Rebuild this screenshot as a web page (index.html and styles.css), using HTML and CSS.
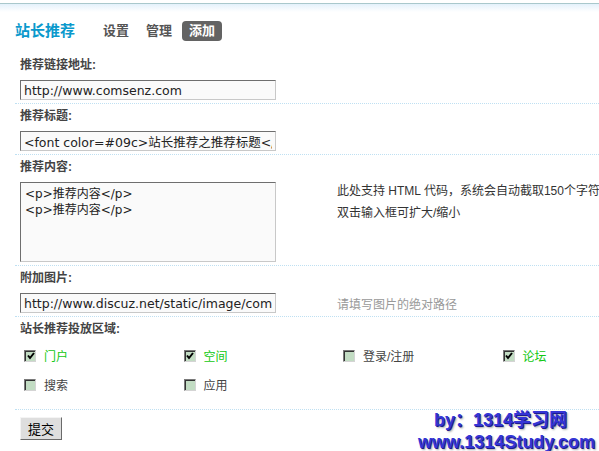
FILE: index.html
```html
<!DOCTYPE html>
<html lang="zh-CN">
  <head>
    <meta charset="utf-8" />
    <title>站长推荐 - 添加</title>
    <link rel="stylesheet" href="styles.css">
  </head>
  <body>
    <div class="topbar"></div>

    <div class="nav">
      <h1 class="nav-title">站长推荐</h1>
      <a class="tab" href="#">设置</a>
      <a class="tab" href="#">管理</a>
      <a class="tab current" href="#">添加</a>
    </div>

    <form class="form">
      <div class="row">
        <div class="label">推荐链接地址:</div>
        <div class="field">
          <input class="txt" type="text" value="http://www.comsenz.com">
        </div>
      </div>

      <div class="row">
        <div class="label">推荐标题:</div>
        <div class="field">
          <input class="txt" type="text" value="<font color=#09c>站长推荐之推荐标题</font>">
        </div>
      </div>

      <div class="row">
        <div class="label">推荐内容:</div>
        <div class="field field-top">
          <textarea class="area"><p>推荐内容</p>
<p>推荐内容</p></textarea>
          <div class="hint hint-dark">
            此处支持 HTML 代码，系统会自动截取150个字符<br>
            双击输入框可扩大/缩小
          </div>
        </div>
      </div>

      <div class="row">
        <div class="label">附加图片:</div>
        <div class="field">
          <input class="txt" type="text" value="http://www.discuz.net/static/image/common/logo.png">
          <div class="hint">请填写图片的绝对路径</div>
        </div>
      </div>

      <div class="row row-checks">
        <div class="label">站长推荐投放区域:</div>
        <div class="checks">
          <label class="check on"><span class="box"><svg viewBox="0 0 8 8"><polyline points="1,3.5 3,6 7,1"/></svg></span>门户</label>
          <label class="check on"><span class="box"><svg viewBox="0 0 8 8"><polyline points="1,3.5 3,6 7,1"/></svg></span>空间</label>
          <label class="check"><span class="box"></span>登录/注册</label>
          <label class="check on"><span class="box"><svg viewBox="0 0 8 8"><polyline points="1,3.5 3,6 7,1"/></svg></span>论坛</label>
          <label class="check"><span class="box"></span>搜索</label>
          <label class="check"><span class="box"></span>应用</label>
        </div>
      </div>

      <div class="row row-submit">
        <button class="btn" type="button">提交</button>
      </div>
    </form>

    <!-- site watermark over the corner -->
    <div class="watermark">
      <div class="wm-line wm-first">by：1314学习网</div>
      <div class="wm-line">www.1314Study.com</div>
    </div>
  </body>
</html>
```

FILE: styles.css
```css
html,
body {
  margin: 0;
  overflow: hidden;
}
body {
  position: relative;
  height: 451px;
  background: #fff;
  font-family: "Liberation Sans", "Noto Sans CJK SC", sans-serif;
  font-size: 12px;
  color: #333;
}

.topbar {
  margin-top: 3px;
  height: 8px;
  border-top: 1px solid #a9c8cc;
  background: linear-gradient(#e4f1fb, #fff);
}

.nav {
  display: flex;
  align-items: center;
  height: 20px;
  padding: 9px 0 12px 15px;
}
.nav-title {
  margin: 0 21px 0 0;
  font-size: 15px;
  font-weight: bold;
  line-height: 20px;
  color: #0a99cc;
}
.tab {
  margin-right: 3px;
  padding: 0 7px;
  font-size: 13px;
  font-weight: bold;
  line-height: 20px;
  color: #555;
  text-decoration: none;
}
.tab.current {
  background: #636363;
  color: #fff;
  border-radius: 4px;
}

.row {
  margin-left: 15px;
  padding: 3px 0 3px 5px;
  border-bottom: 1px dotted #bfe0f2;
}
.label {
  margin-bottom: 6px;
  line-height: 18px;
  font-weight: bold;
  color: #444;
}
.field {
  display: flex;
  align-items: center;
  overflow: hidden;
  white-space: nowrap;
}
.field-top {
  align-items: flex-start;
}

.txt,
.area {
  box-sizing: border-box;
  flex: none;
  width: 256px;
  margin: 0;
  background: #fafafa;
  border: 1px solid;
  border-color: #6e6e6e #c8c8c8 #c8c8c8 #6e6e6e;
  font-family: "DejaVu Sans", "Noto Sans CJK SC", sans-serif;
  color: #222;
  outline: none;
}
.txt {
  height: 20px;
  padding: 0 3px;
  font-size: 12.5px;
}
.area {
  height: 80px;
  padding: 3px 4px;
  font-size: 12px;
  line-height: 16px;
  resize: none;
}

/* long hint is cut at the window edge, as in the old admin page */
.hint {
  min-width: 0;
  margin-left: 61px;
  overflow: hidden;
  color: #999;
}
.hint-dark {
  margin-top: -2px;
  line-height: 22px;
  color: #333;
}

.row-checks {
  padding-bottom: 10px;
}
.checks {
  display: grid;
  grid-template-columns: repeat(3, 159.5px) 1fr;
  grid-auto-rows: 29px;
  margin: -3px 0 0 -5px;
}
.check {
  display: flex;
  align-items: center;
  padding-left: 9px;
  color: #444;
}
.check.on {
  color: #11c811;
}
.box {
  box-sizing: border-box;
  display: flex;
  align-items: center;
  justify-content: center;
  width: 12px;
  height: 12px;
  margin-right: 8px;
  background: #c2dcc3;
  border: 1px solid;
  border-color: #7a7a7a #d4d4d4 #d4d4d4 #7a7a7a;
  box-shadow: inset 1px 1px 0 #333;
}
.box svg {
  width: 8px;
  height: 8px;
  margin: 1px 0 0 1px;
}
.box polyline {
  fill: none;
  stroke: #000;
  stroke-width: 2;
}

.row-submit {
  padding-top: 7px;
  border-bottom: none;
}
.btn {
  width: 42px;
  height: 23px;
  padding: 0;
  background: #dedede;
  border: 1px solid;
  border-color: #f4f4f4 #6a6a6a #6a6a6a #f4f4f4;
  font-family: "Liberation Sans", "Noto Sans CJK SC", sans-serif;
  font-size: 13px;
  color: #000;
}

.watermark {
  position: absolute;
  left: 418px;
  top: 409px;
  font-family: "Liberation Sans", "Noto Sans CJK SC", sans-serif;
  font-size: 18px;
  font-weight: bold;
  line-height: 22px;
  color: #3535d6;
  text-shadow: 1px 1px 0 #1c1c8c, 2px 2px 2px #aaa;
  white-space: nowrap;
}
.wm-first {
  margin-left: 16px;
}
```
